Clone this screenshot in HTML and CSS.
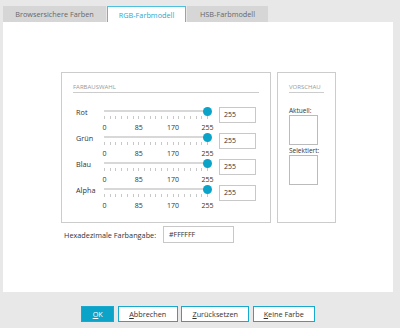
FILE: index.html
```html
<!DOCTYPE html>
<html lang="de">
<head>
<meta charset="utf-8">
<link rel="stylesheet" href="styles.css">
</head>
<body>
<div class="tabs">
  <div class="tab tab-1">Browsersichere Farben</div>
  <div class="tab tab-active">RGB-Farbmodell</div>
  <div class="tab tab-3">HSB-Farbmodell</div>
</div>
<div class="panel">
  <div class="content">
    <div class="boxes">
      <div class="group group-main">
        <div class="legend">FARBAUSWAHL</div>
        <div class="rows">
          <div class="row">
            <div class="label">Rot</div>
            <div class="slider">
              <div class="track"></div>
              <div class="thumb"></div>
              <div class="ticks"></div>
              <div class="nums"><span class="n0">0</span><span class="n1">85</span><span class="n2">170</span><span class="n3">255</span></div>
            </div>
            <div class="input">255</div>
          </div>
          <div class="row">
            <div class="label">Grün</div>
            <div class="slider">
              <div class="track"></div>
              <div class="thumb"></div>
              <div class="ticks"></div>
              <div class="nums"><span class="n0">0</span><span class="n1">85</span><span class="n2">170</span><span class="n3">255</span></div>
            </div>
            <div class="input">255</div>
          </div>
          <div class="row">
            <div class="label">Blau</div>
            <div class="slider">
              <div class="track"></div>
              <div class="thumb"></div>
              <div class="ticks"></div>
              <div class="nums"><span class="n0">0</span><span class="n1">85</span><span class="n2">170</span><span class="n3">255</span></div>
            </div>
            <div class="input">255</div>
          </div>
          <div class="row">
            <div class="label">Alpha</div>
            <div class="slider">
              <div class="track"></div>
              <div class="thumb"></div>
              <div class="ticks"></div>
              <div class="nums"><span class="n0">0</span><span class="n1">85</span><span class="n2">170</span><span class="n3">255</span></div>
            </div>
            <div class="input">255</div>
          </div>
        </div>
      </div>
      <div class="group group-preview">
        <div class="legend">VORSCHAU</div>
        <div class="plabel plabel-1">Aktuell:</div>
        <div class="swatch"></div>
        <div class="plabel">Selektiert:</div>
        <div class="swatch"></div>
      </div>
    </div>
    <div class="hexrow">
      <span class="hexlabel">Hexadezimale Farbangabe:</span>
      <div class="hexinput">#FFFFFF</div>
    </div>
  </div>
</div>
<div class="buttons">
  <div class="btn btn-ok"><u>O</u>K</div>
  <div class="btn btn-abbr"><u>A</u>bbrechen</div>
  <div class="btn btn-zur"><u>Z</u>urücksetzen</div>
  <div class="btn btn-keine"><u>K</u>eine Farbe</div>
</div>
</body>
</html>
```

FILE: styles.css
```css
* { box-sizing: border-box; }
html, body { margin: 0; padding: 0; }
body {
  width: 400px;
  height: 328px;
  background: #e8e8e8;
  font-family: "Open Sans", "DejaVu Sans", sans-serif;
  font-size: 7px;
  color: #333;
  overflow: hidden;
}
.tabs {
  display: flex;
  padding: 6px 0 0 3px;
  height: 22px;
}
.tab {
  height: 16px;
  display: flex;
  align-items: center;
  justify-content: center;
  background: #d6d6d6;
  color: #666;
  font-size: 7.3px;
  margin-right: 1px;
}
.tab-1 { width: 103px; }
.tab-active {
  width: 79px;
  background: #fff;
  color: #2aa8cc;
  border: 1px solid #4cc0dc;
  border-bottom: none;
}
.tab-3 { width: 81px; }
.panel {
  margin-left: 3px;
  width: 390px;
  height: 270px;
  background: #fff;
  padding: 50px 0 0 58px;
}
.boxes {
  display: flex;
  gap: 6px;
}
.group {
  border: 1px solid #ccc;
  height: 151px;
  padding: 10px 11px 0 11px;
}
.group-main { width: 210px; }
.group-preview { width: 59px; }
.legend {
  font-size: 6px;
  color: #999;
  height: 10px;
  line-height: 8px;
  border-bottom: 1px solid #ccc;
}
.rows {
  padding-top: 11px;
}
.row {
  display: flex;
  height: 26px;
  padding-left: 3px;
}
.label {
  width: 28px;
  padding-top: 3px;
  font-size: 7.3px;
  color: #333;
}
.slider {
  position: relative;
  width: 103px;
  height: 26px;
}
.track {
  position: absolute;
  left: 0;
  right: 0;
  top: 6px;
  height: 2px;
  background: #d8d8d8;
}
.thumb {
  position: absolute;
  left: 98.5px;
  top: 2.5px;
  width: 9px;
  height: 9px;
  border-radius: 50%;
  background: #0ba3c8;
}
.ticks {
  position: absolute;
  left: 0;
  width: 104px;
  top: 12px;
  height: 3px;
  background: repeating-linear-gradient(to right, #c8c8c8 0, #c8c8c8 1px, transparent 1px, transparent 5.722px);
}
.nums {
  position: absolute;
  left: 0;
  right: 0;
  top: 18.5px;
  height: 10px;
  font-size: 7px;
  color: #333;
}
.nums span {
  position: absolute;
  top: 0;
  transform: translateX(-50%);
}
.n0 { left: 0.5px; }
.n1 { left: 34.8px; }
.n2 { left: 69px; }
.n3 { left: 103.5px; }
.input {
  margin-left: 12px;
  margin-top: 3px;
  width: 37px;
  height: 16px;
  border: 1px solid #c8c8c8;
  padding-left: 4px;
  line-height: 14px;
  font-size: 7px;
}
.plabel {
  margin-top: 2px;
  font-size: 6.5px;
  color: #333;
  line-height: 8px;
}
.plabel-1 { margin-top: 14px; }
.swatch {
  width: 29px;
  height: 30px;
  border: 1px solid #bbb;
}
.hexrow {
  display: flex;
  align-items: center;
  margin-top: 3px;
  padding-left: 3px;
}
.hexlabel {
  width: 99px;
  font-size: 7.3px;
}
.hexinput {
  width: 71px;
  height: 17px;
  border: 1px solid #c8c8c8;
  padding-left: 5px;
  line-height: 15px;
  font-size: 7px;
}
.buttons {
  display: flex;
  justify-content: center;
  gap: 3.5px;
  padding: 14px 0 0 0;
  width: 396px;
}
.btn {
  height: 16px;
  border: 1px solid #19a9cd;
  background: #fff;
  color: #333;
  display: flex;
  align-items: center;
  justify-content: center;
  font-size: 7.3px;
}
.btn u { text-decoration: underline; }
.btn-ok { width: 33px; background: #0ba3c8; color: #fff; }
.btn-abbr { width: 60px; }
.btn-zur { width: 68px; }
.btn-keine { width: 62px; }
```
